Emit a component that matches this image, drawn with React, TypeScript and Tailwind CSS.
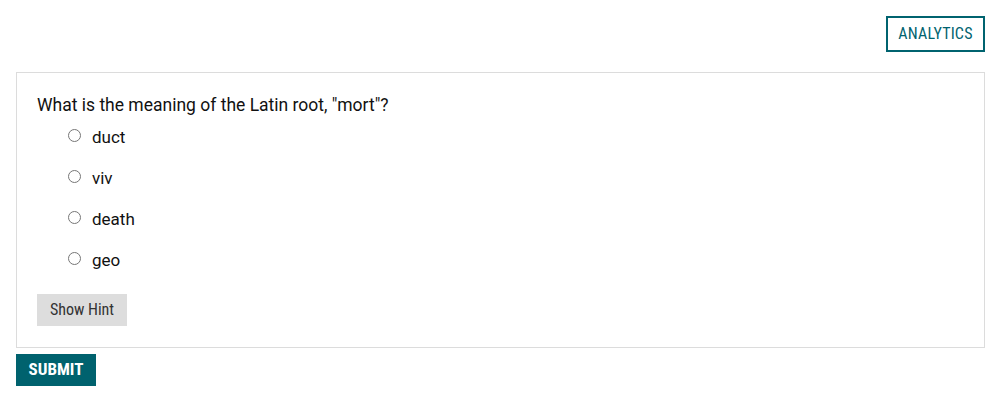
import { useState } from "react";

const options = ["duct", "viv", "death", "geo"];

export default function App() {
  const [choice, setChoice] = useState<string | null>(null);

  return (
    <main className="min-h-screen bg-white px-4 pt-4 font-['Roboto',sans-serif] text-[#111]">
      <div className="flex justify-end">
        <button className="h-9 w-[99px] border-2 border-[#00636f] text-[16px] tracking-[0.2px] text-[#00636f] font-['Roboto_Condensed','Liberation_Sans_Narrow',sans-serif]">
          ANALYTICS
        </button>
      </div>

      <section className="mt-5 border border-[#dcdcdc] px-5 pt-[21px] pb-[21px]">
        <p className="text-[17.5px] leading-[22px]">What is the meaning of the Latin root, "mort"?</p>
        <ul className="mt-0 pl-[31px]">
          {options.map((opt) => (
            <li key={opt} className="flex h-[41px] items-center">
              <label className="flex items-center gap-[11px] text-[17px]">
                <input
                  type="radio"
                  name="q"
                  checked={choice === opt}
                  onChange={() => setChoice(opt)}
                  className="m-0 h-[13px] w-[13px] relative -top-[1px]"
                />
                <span className="relative top-[1px]">{opt}</span>
              </label>
            </li>
          ))}
        </ul>
        <button className="mt-[14px] h-8 w-[90px] bg-[#dddddd] text-[16px] text-[#333] font-['Roboto_Condensed','Liberation_Sans_Narrow',sans-serif]">
          Show Hint
        </button>
      </section>

      <button className="mt-[6px] h-8 w-20 bg-[#00626e] text-[17px] font-bold text-white font-['Roboto_Condensed','Liberation_Sans_Narrow',sans-serif]">
        SUBMIT
      </button>
    </main>
  );
}
